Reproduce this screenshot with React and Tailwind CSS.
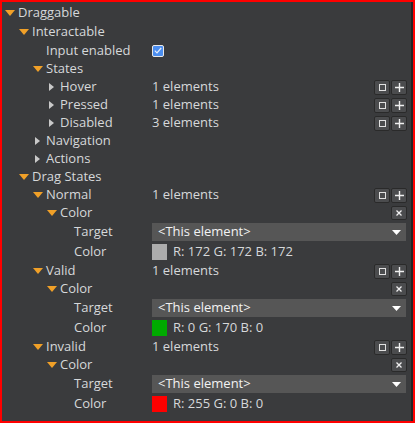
import React from "react";

const font = { fontFamily: '"Open Sans", "Noto Sans", "Liberation Sans", sans-serif' };

function Down() {
  return (
    <svg width="10" height="6" viewBox="0 0 10 6" className="shrink-0">
      <polygon points="0,0 10,0 5,6" fill="#f0a028" />
    </svg>
  );
}

function Right() {
  return (
    <svg width="10" height="10" viewBox="0 0 10 10" className="shrink-0">
      <polygon points="2,1 7,5 2,9" fill="#c9c9c9" />
    </svg>
  );
}

function Btn({ children }) {
  return (
    <div className="flex h-[15px] w-[16px] items-center justify-center rounded-[2px] border border-[#2a2a2a] bg-[#4b4c4e]">
      {children}
    </div>
  );
}

function Buttons() {
  return (
    <div className="ml-auto flex gap-[1px] pr-[4px]">
      <Btn>
        <div className="h-[7px] w-[7px] border border-[#e0e0e0]" />
      </Btn>
      <Btn>
        <svg width="9" height="9" viewBox="0 0 9 9">
          <path d="M4.5 0v9M0 4.5h9" stroke="#f0f0f0" strokeWidth="1.4" />
        </svg>
      </Btn>
    </div>
  );
}

function Close() {
  return (
    <div className="ml-auto pr-[4px]">
      <div className="flex h-[14px] w-[16px] items-center justify-center rounded-[2px] border border-[#2a2a2a] bg-[#4b4c4e]">
        <svg width="6" height="6" viewBox="0 0 6 6">
          <path d="M0.5 0.5l5 5M5.5 0.5l-5 5" stroke="#f0f0f0" strokeWidth="1.3" />
        </svg>
      </div>
    </div>
  );
}

function Row({ level, icon, label, h = "h-[18px]", children }) {
  return (
    <div className={`flex items-center ${h}`}>
      <div className="flex w-[150px] shrink-0 items-center" style={{ paddingLeft: 3 + level * 14 }}>
        <div className="flex w-[13px] items-center justify-start">
          {icon === "down" ? <Down /> : icon === "right" ? <Right /> : null}
        </div>
        <span className="whitespace-nowrap">{label}</span>
      </div>
      <div className="flex flex-1 items-center">{children}</div>
    </div>
  );
}

function Target() {
  return (
    <div className="mr-[5px] flex h-[18px] flex-1 items-center justify-between bg-[#565656] pl-[6px] pr-[5px] text-[#f2f2f2]">
      <span>&lt;This element&gt;</span>
      <svg width="9" height="5" viewBox="0 0 9 5">
        <polygon points="0,0 9,0 4.5,5" fill="#ffffff" />
      </svg>
    </div>
  );
}

function Swatch({ color, text }) {
  return (
    <div className="flex items-center gap-[6px]">
      <div className={`h-[16px] w-[15px] ${color}`} />
      <span>{text}</span>
    </div>
  );
}

function StateBlock({ name, color, text }) {
  return (
    <>
      <Row level={2} icon="down" label={name}>
        <span>1 elements</span>
        <Buttons />
      </Row>
      <Row level={3} icon="down" label="Color">
        <Close />
      </Row>
      <Row level={4} label="Target" h="h-[20px]">
        <Target />
      </Row>
      <Row level={4} label="Color" h="h-[20px]">
        <Swatch color={color} text={text} />
      </Row>
    </>
  );
}

export default function App() {
  return (
    <div
      className="flex h-[423px] w-[415px] overflow-hidden border-2 border-[#ff0000] bg-[#3a3b3d] text-[13px] text-[#d6d8da]"
      style={font}
    >
      <div className="flex-1 pt-[2px]">
        <Row level={0} icon="down" label="Draggable" />
        <Row level={1} icon="down" label="Interactable" h="h-[19px]" />
        <Row level={2} label="Input enabled" h="h-[19px]">
          <div className="flex h-[12px] w-[12px] items-center justify-center rounded-[2px] border border-[#e8e8e8] bg-[#4b8ef0]">
            <svg width="8" height="7" viewBox="0 0 8 7">
              <path d="M0.8 3.6l2.2 2.2 4.2-4.8" stroke="#e6eefc" strokeWidth="1.2" fill="none" />
            </svg>
          </div>
        </Row>
        <Row level={2} icon="down" label="States" />
        <Row level={3} icon="right" label="Hover">
          <span>1 elements</span>
          <Buttons />
        </Row>
        <Row level={3} icon="right" label="Pressed">
          <span>1 elements</span>
          <Buttons />
        </Row>
        <Row level={3} icon="right" label="Disabled">
          <span>3 elements</span>
          <Buttons />
        </Row>
        <Row level={2} icon="right" label="Navigation" />
        <Row level={2} icon="right" label="Actions" />
        <Row level={1} icon="down" label="Drag States" />
        <StateBlock name="Normal" color="bg-[#acacac]" text="R: 172 G: 172 B: 172" />
        <StateBlock name="Valid" color="bg-[#00aa00]" text="R: 0 G: 170 B: 0" />
        <StateBlock name="Invalid" color="bg-[#ff0000]" text="R: 255 G: 0 B: 0" />
      </div>
      <div className="w-[2px] bg-[#242526]" />
    </div>
  );
}
